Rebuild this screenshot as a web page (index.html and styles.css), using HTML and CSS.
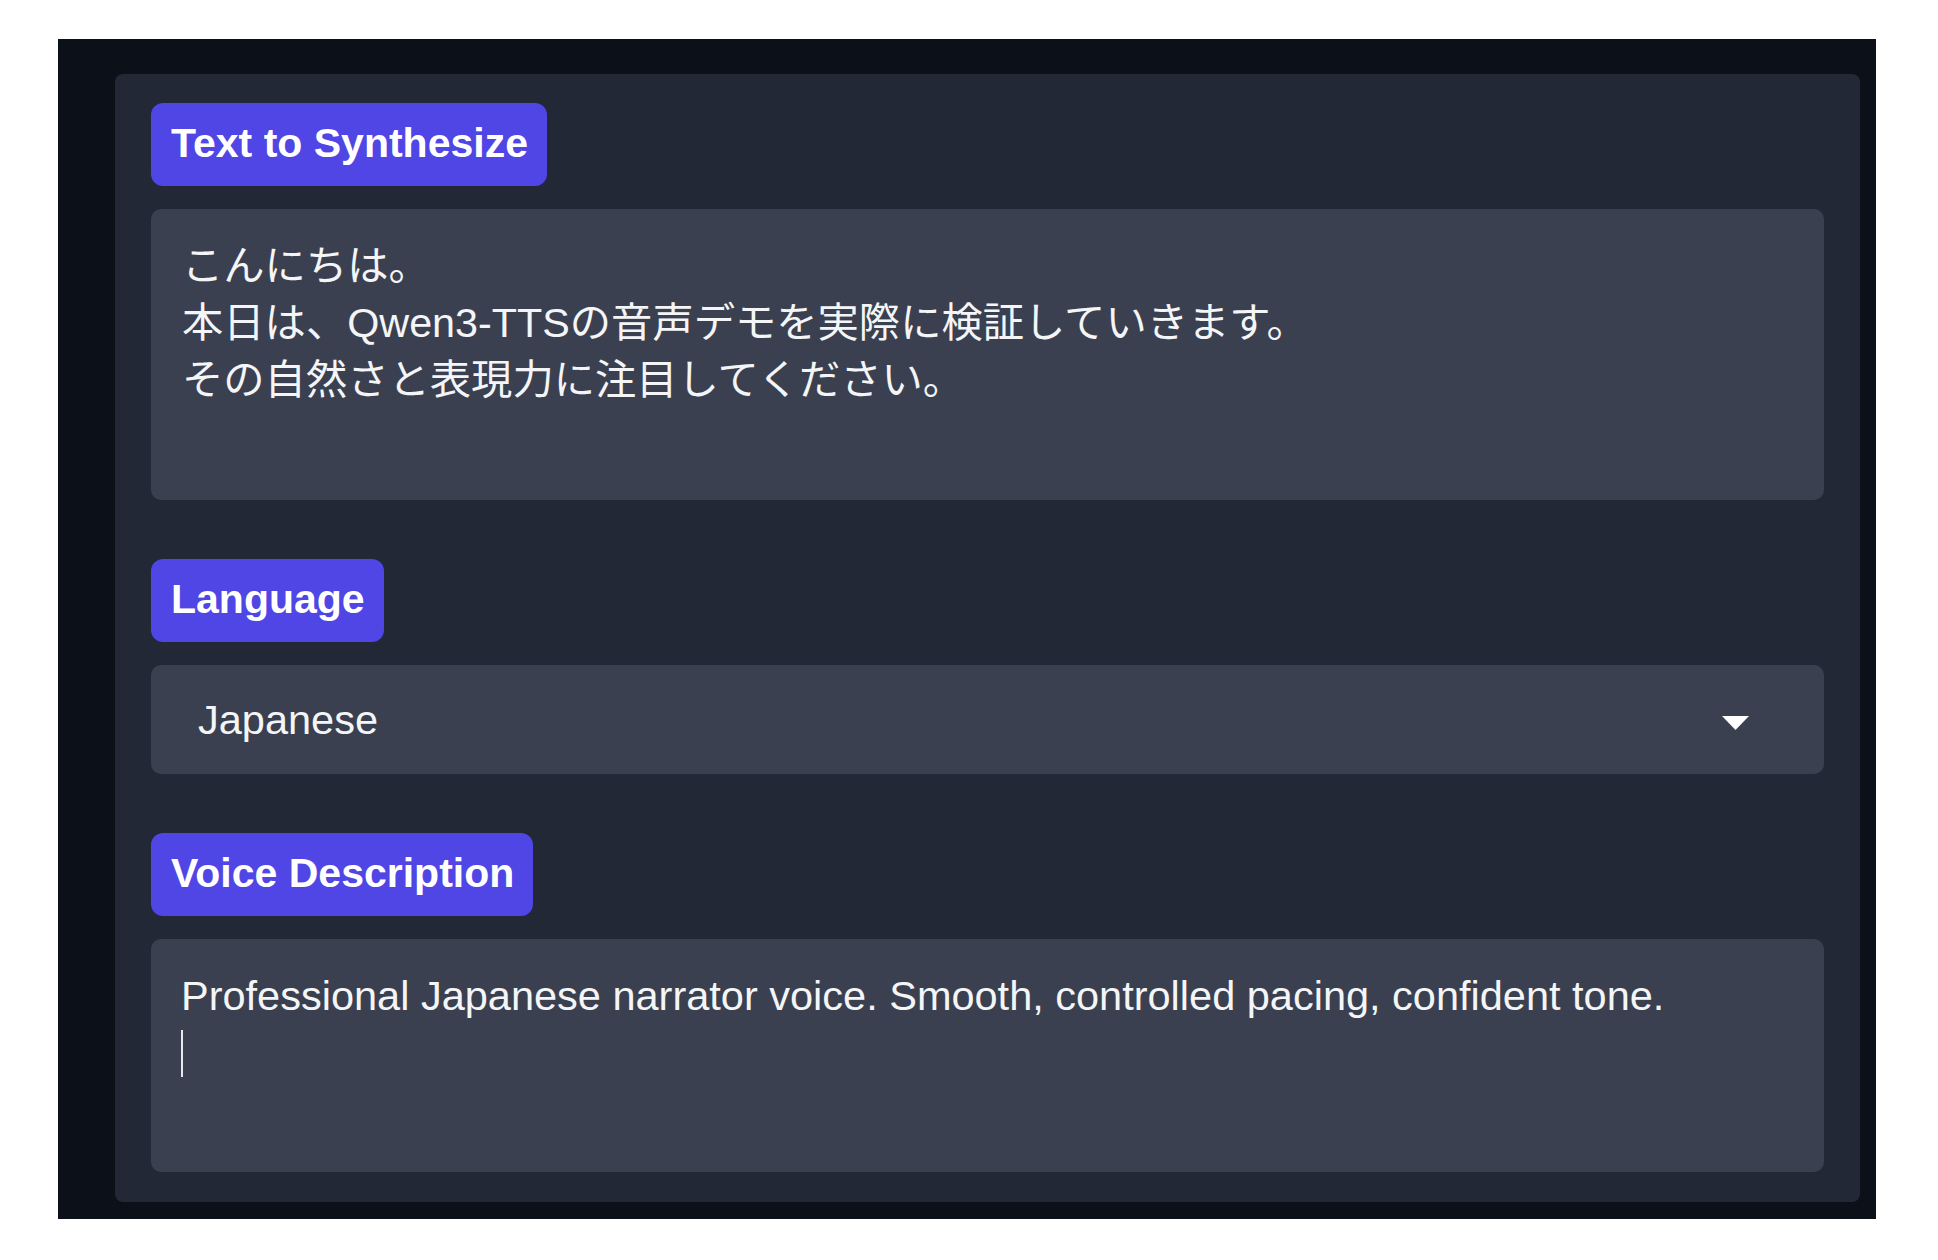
FILE: index.html
```html
<!DOCTYPE html>
<html lang="ja">
<head>
  <meta charset="UTF-8" />
  <meta name="viewport" content="width=device-width, initial-scale=1.0" />
  <title>Qwen3-TTS Voice Design</title>
  <link rel="stylesheet" href="styles.css">
</head>
<body>
  <div class="frame">
    <div class="panel">

      <div class="group">
        <div class="label">Text to Synthesize</div>
        <div class="input textarea-jp">
          <div class="line">こんにちは。</div>
          <div class="line">本日は、Qwen3-TTSの音声デモを実際に検証していきます。</div>
          <div class="line">その自然さと表現力に注目してください。</div>
        </div>
      </div>

      <div class="group">
        <div class="label">Language</div>
        <div class="input select">
          <span class="select-value">Japanese</span>
          <svg class="select-arrow" width="27" height="14" viewBox="0 0 27 14">
            <path d="M0 0 L27 0 L13.5 14 Z" fill="#ffffff" />
          </svg>
        </div>
      </div>

      <div class="group">
        <div class="label">Voice Description</div>
        <div class="input textarea-en">
          <div class="line">Professional Japanese narrator voice. Smooth, controlled pacing, confident tone.</div>
          <div class="line"><span class="caret"></span></div>
        </div>
      </div>

    </div>
  </div>
</body>
</html>
```

FILE: styles.css
```css
body {
  margin: 0;
  padding: 0;
  background: #ffffff;
  font-family: "Liberation Sans", "Noto Sans CJK JP", sans-serif;
}

.frame {
  margin: 39px 0 0 58px;
  width: 1818px;
  height: 1180px;
  box-sizing: border-box;
  padding: 35px 16px 17px 57px;
  background: #0c1018;
}

.panel {
  height: 100%;
  box-sizing: border-box;
  padding: 29px 36px 0 36px;
  background: #222835;
  border-radius: 8px;
  display: flex;
  flex-direction: column;
  gap: 59px;
}

.group {
  display: flex;
  flex-direction: column;
  align-items: flex-start;
}

.label {
  height: 83px;
  line-height: 81px;
  padding: 0 19px 0 20px;
  background: #4f46e5;
  color: #ffffff;
  font-weight: bold;
  font-size: 41px;
  border-radius: 12px;
  margin-bottom: 23px;
  white-space: nowrap;
}

.input {
  align-self: stretch;
  box-sizing: border-box;
  background: #3a4050;
  border-radius: 10px;
  color: #f4f5f7;
}

.textarea-jp {
  height: 291px;
  padding: 29px 31px;
  font-size: 41.3px;
  line-height: 57px;
}

.textarea-en {
  height: 233px;
  padding: 28px 30px;
  font-size: 41.5px;
  line-height: 57px;
}

.line {
  height: 57px;
  white-space: nowrap;
}

.caret {
  display: inline-block;
  width: 2px;
  height: 47px;
  margin-top: 6px;
  background: #e8e9ec;
  vertical-align: top;
}

.select {
  height: 109px;
  padding: 0 75px 0 47px;
  display: flex;
  align-items: center;
  justify-content: space-between;
  font-size: 41.5px;
}

.select-arrow {
  margin-top: 7px;
}
```
